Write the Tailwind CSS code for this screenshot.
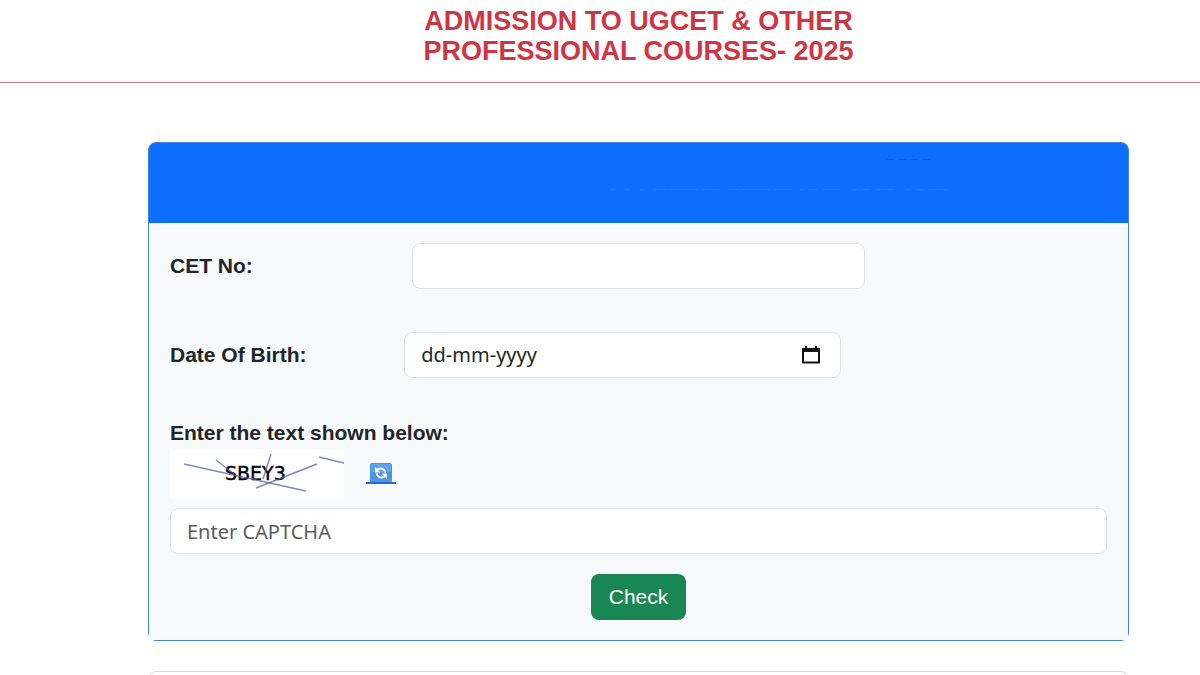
<!DOCTYPE html>
<html lang="en">

<head>
    <meta charset="UTF-8">
    <meta name="viewport" content="width=device-width, initial-scale=1.0">
    <title>Admission to UGCET - 2025</title>
    <script src="https://cdn.jsdelivr.net/npm/@tailwindcss/browser@4"></script>
</head>

<body class="bg-white text-[#212529] font-['Liberation_Sans',Arial,sans-serif] overflow-x-hidden">
    <header class="border-b border-[#cf7a80] pt-[6px] pb-4 pl-[148px] pr-[71px]">
        <h1 class="text-center text-[27px] leading-[30px] font-bold text-[#d03543]">
            ADMISSION TO UGCET &amp; OTHER<br>
            PROFESSIONAL COURSES- 2025
        </h1>
    </header>

    <main class="pt-[59px] pl-[148px] pr-[71px]">
        <!-- Check form -->
        <section class="border border-[#3f86d8] rounded-lg">
            <div class="h-20 bg-[#0d6efd] rounded-t-md flex justify-end pr-[170px]">
                <svg width="350" height="80" viewBox="0 0 350 80" fill="none" stroke-width="1" aria-hidden="true">
                    <path d="M279 16.5h44" stroke="#0a5cd6" stroke-dasharray="7 5" />
                    <path d="M3 46.5h38" stroke="#2f74dd" stroke-dasharray="4 10" />
                    <path d="M46 46.5h145" stroke="#2f74dd" stroke-dasharray="12 2 30 3 18 8" />
                    <path d="M192 46.5h150" stroke="#2f74dd" stroke-dasharray="5 4 8 6 18 12" />
                </svg>
            </div>

            <form id="checkForm" class="bg-[#f8f9fb] px-[21px] py-5 text-[21px]">
                <div class="flex items-center mb-[43px]">
                    <label for="cetNo" class="w-1/4 font-bold">CET No:</label>
                    <input type="text" id="cetNo"
                        class="ml-2 w-[453px] h-[46px] px-4 bg-white border border-[#dee2e6] rounded-lg outline-none focus:border-[#86b7fe]">
                </div>

                <div class="flex items-center mb-[43px]">
                    <label for="dob" class="w-1/4 font-bold">Date Of Birth:</label>
                    <div
                        class="w-[437px] h-[46px] pl-4 pr-5 flex items-center bg-white border border-[#dee2e6] rounded-lg">
                        <input type="text" id="dob" placeholder="dd-mm-yyyy"
                            class="flex-1 min-w-0 text-xl font-['Noto_Sans',sans-serif] placeholder:text-[#212529] outline-none">
                        <button type="button" aria-label="Pick a date">
                            <svg width="18" height="18" viewBox="0 0 18 18" fill="none" class="block">
                                <path d="M1 3.5h16v13H1z" stroke="#111" stroke-width="2" stroke-linejoin="round" />
                                <path d="M0 2h18v4H0zM3 0h2v3H3zM13 0h2v3h-2z" fill="#111" />
                            </svg>
                        </button>
                    </div>
                </div>

                <label for="captcha" class="block mb-1 font-bold leading-6">Enter the text shown below:</label>
                <div class="flex items-center gap-[22px] mb-[10px]">
                    <svg width="174" height="49" viewBox="0 0 174 49" class="bg-white" role="img"
                        aria-label="Captcha">
                        <text x="55" y="31" font-family="DejaVu Sans" font-size="19" fill="#000" stroke="#000"
                            stroke-width="0.4">SBEY3</text>
                        <g stroke="#4f62b0" stroke-opacity="0.75" stroke-width="1.5">
                            <path d="M14 15L136 42" />
                            <path d="M46 11L64 25" />
                            <path d="M101 5L93 30" />
                            <path d="M86 39L147 15" />
                            <path d="M149 8L174 14" />
                        </g>
                    </svg>
                    <a href="#" id="refreshCaptcha" aria-label="Refresh captcha">
                        <svg width="30" height="26" viewBox="0 0 30 26" class="block">
                            <rect x="4" y="2" width="22" height="20" rx="2" fill="#4a94e6" />
                            <rect x="5" y="3" width="20" height="8" rx="1" fill="#5fa3ec" />
                            <path d="M0 21h30v2H0z" fill="#2468d0" />
                            <g fill="none" stroke="#fff" stroke-width="2">
                                <path d="M11 9C13.500 6.500 18 7 19.500 11.500" />
                                <path d="M19 15C16.500 17.500 12 17 10.500 12.500" />
                            </g>
                            <path d="M9 6v5.500h5.500z M21 18v-5.500h-5.500z" fill="#fff" />
                        </svg>
                    </a>
                </div>
                <input type="text" id="captcha" placeholder="Enter CAPTCHA"
                    class="block w-full h-[46px] px-4 bg-white border border-[#dee2e6] rounded-lg text-xl font-['Noto_Sans',sans-serif] placeholder:text-[#595c5f] outline-none focus:border-[#86b7fe]">

                <div class="mt-5 text-center">
                    <button type="submit"
                        class="h-[46px] px-[18px] align-top bg-[#198754] text-white rounded-lg hover:bg-[#157347]">Check</button>
                </div>
            </form>
        </section>

        <!-- Result -->
        <section class="mt-[30px] h-10 border border-[#d5d7da] rounded-lg"></section>
    </main>

    <script>
        document.getElementById('checkForm').addEventListener('submit', function (event) {
            event.preventDefault();
        });
    </script>
</body>

</html>
